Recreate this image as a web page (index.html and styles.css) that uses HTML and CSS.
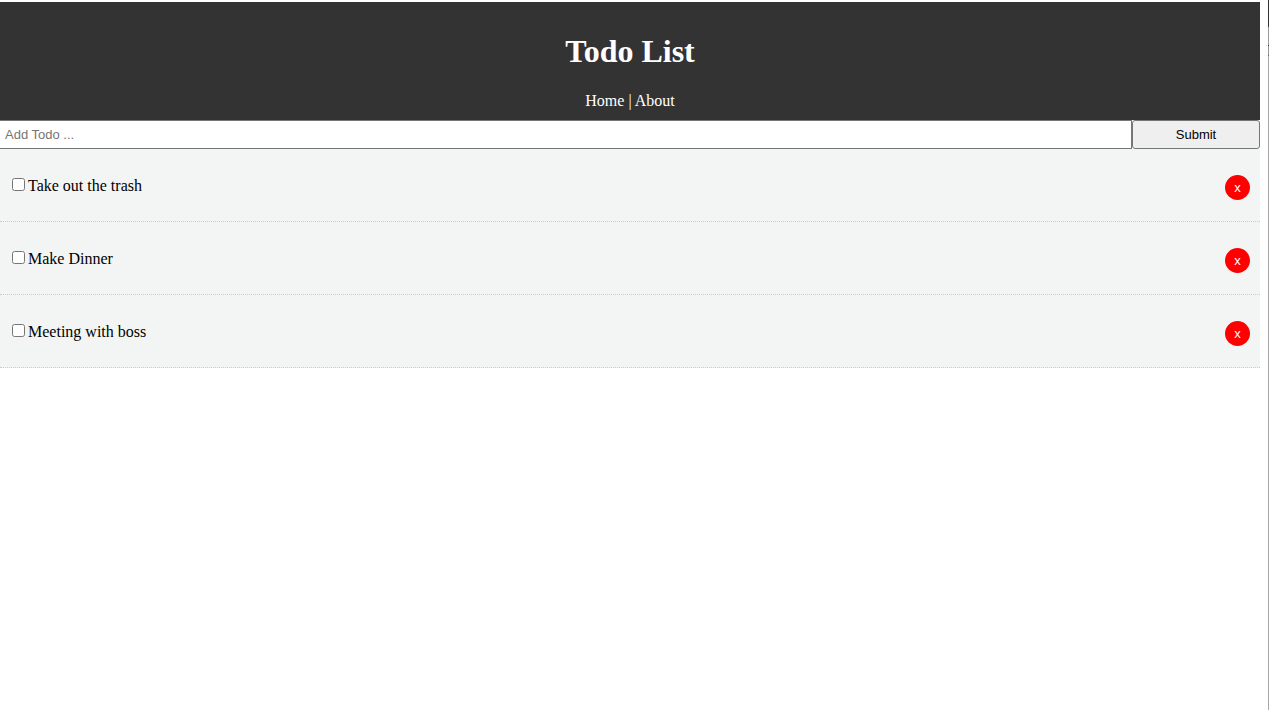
FILE: index.html
```html
<!DOCTYPE html>
<html lang="en">
<head>
<meta charset="utf-8">
<title>Todo List</title>
<link rel="stylesheet" href="styles.css">
</head>
<body>
<div class="app">
  <header class="header">
    <h1 class="title">Todo List</h1>
    <nav><a class="link" href="#home">Home</a> | <a class="link" href="#about">About</a></nav>
  </header>
  <main>
    <form class="add-form">
      <input class="add-input" type="text" name="title" placeholder="Add Todo ..." aria-label="Add Todo">
      <button class="submit" type="submit">Submit</button>
    </form>
    <div class="item">
      <label class="task"><input class="check" type="checkbox">Take out the trash</label>
      <button class="delete" type="button" aria-label="Delete Take out the trash">x</button>
    </div>
    <div class="item">
      <label class="task"><input class="check" type="checkbox">Make Dinner</label>
      <button class="delete" type="button" aria-label="Delete Make Dinner">x</button>
    </div>
    <div class="item">
      <label class="task"><input class="check" type="checkbox">Meeting with boss</label>
      <button class="delete" type="button" aria-label="Delete Meeting with boss">x</button>
    </div>
  </main>
</div>
<div class="edge"></div>
</body>
</html>
```

FILE: styles.css
```css
* {
  box-sizing: border-box;
}

body {
  display: flex;
  min-height: 100vh;
  margin: 0;
  background: #fff;
  color: #000;
  font: 16px/18px "Liberation Serif", "Times New Roman", serif;
}

.app {
  flex: 1;
  padding-top: 2px;
}

.edge {
  width: 1px;
  margin-left: 8px;
  background: linear-gradient(#333 27px, #999 27px 45px, #333 45px 46px, #999 46px 55px, #666 55px 56px, #a6a6a6 56px);
}

.header {
  padding: 10px;
  background: #333;
  color: #fff;
  text-align: center;
}

.title {
  margin: 0;
  padding: 21px 0 22px;
  font-size: 32px;
  line-height: 37px;
}

.link {
  color: #fff;
  text-decoration: none;
}

.add-form {
  display: flex;
}

.add-input,
.submit {
  height: 29px;
  border: 1px solid #767676;
  font: 13px/15px "Liberation Sans", Arial, sans-serif;
}

.add-input {
  flex: 1;
  min-width: 0;
  padding: 5px;
  border-left: 0;
  border-radius: 0;
  background: #fff;
}

.add-input::placeholder {
  color: #757575;
}

.submit {
  width: 128px;
  padding: 0;
  border-radius: 3px;
  background: #efefef;
  color: #000;
}

.item {
  display: flex;
  align-items: center;
  justify-content: space-between;
  height: 73px;
  padding: 4px 10px 0 12px;
  border-bottom: 1px dotted #ccc;
  background: #f3f5f4;
}

.task {
  display: flex;
  align-items: center;
  gap: 3px;
  padding-bottom: 2px;
}

.check {
  width: 13px;
  height: 13px;
  margin: 0 0 3px;
}

.delete {
  width: 25px;
  height: 25px;
  padding: 0;
  border: 0;
  border-radius: 50%;
  background: #f00;
  color: #fff;
  font: 13px/15px "Liberation Sans", Arial, sans-serif;
}
```
